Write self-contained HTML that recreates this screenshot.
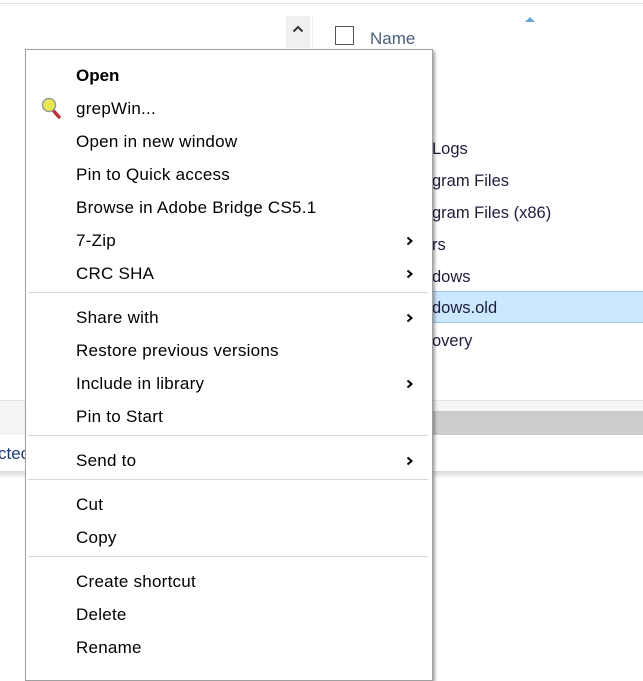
<!DOCTYPE html>
<html><head><style>
body{margin:0;width:643px;height:666px;overflow:hidden;background:#fff;font-family:"Liberation Sans",sans-serif;position:relative}
.a{position:absolute}
.f{position:absolute;left:420px;font-size:16.5px;color:#1e1e3c;white-space:nowrap;overflow:hidden;width:223px;height:32px;line-height:34px;padding-left:12px;box-sizing:border-box}
#menu{position:absolute;left:25px;top:49px;width:406px;height:630px;border:1px solid #a0a0a0;background:#fff;box-shadow:2px 2px 3px rgba(0,0,0,.35)}
.i{position:absolute;left:50px;font-size:17px;letter-spacing:0.25px;color:#000;line-height:20px}
.r{position:absolute;left:380px;}
.s{position:absolute;left:2px;width:400px;height:1px;background:#d7d7d7}
</style></head><body>
<div class="a" style="left:0;top:3px;width:643px;height:1px;background:#e3e3e3"></div>
<div class="a" style="left:286px;top:16px;width:24px;height:32px;background:#f0f0f0"></div>
<svg class="a" style="left:292px;top:25px" width="12" height="8"><path d="M1.5 6.5 L6 2 L10.5 6.5" fill="none" stroke="#333" stroke-width="2"/></svg>
<div class="a" style="left:312px;top:16px;width:1px;height:32px;background:#f0f0f0"></div>
<div class="a" style="left:335px;top:26px;width:19px;height:19px;border:1px solid #555;box-sizing:border-box"></div>
<div class="a" style="left:370px;top:29px;font-size:17px;color:#4c607a">Name</div>
<div class="a" style="left:525px;top:17px;width:0;height:0;border-left:5px solid transparent;border-right:5px solid transparent;border-bottom:5px solid #6aa5d6"></div>

<div class="f" style="top:132px">Logs</div>
<div class="f" style="top:164px">gram Files</div>
<div class="f" style="top:196px">gram Files (x86)</div>
<div class="f" style="top:228px">rs</div>
<div class="f" style="top:260px">dows</div>
<div class="f" style="top:291px;height:32px;background:#cce8ff;border-top:1px solid #99c9ef;border-bottom:1px solid #99c9ef;line-height:32px">dows.old</div>
<div class="f" style="top:324px">overy</div>

<div class="a" style="left:0;top:400px;width:643px;height:35px;background:#f5f5f5;border-top:1px solid #e3e3e3"></div>
<div class="a" style="left:400px;top:411px;width:243px;height:24px;background:#cccccc"></div>
<div class="a" style="left:0;top:435px;width:643px;height:36px;background:#fff"></div>
<div class="a" style="left:-2px;top:444px;font-size:17px;color:#1e3c78">ctec</div>
<div class="a" style="left:0;top:471px;width:643px;height:8px;background:linear-gradient(#d8d8d8,#fff)"></div>

<div id="menu">
<div class="i" style="top:16px;font-weight:bold;letter-spacing:0">Open</div>
<svg class="a" style="left:14px;top:47px" width="22" height="22" viewBox="0 0 22 22"><line x1="12" y1="12" x2="19" y2="20" stroke="#c0303a" stroke-width="3.5" stroke-linecap="round"/><circle cx="9" cy="8" r="6.5" fill="#eaea50" stroke="#9a9a9a" stroke-width="1.5"/></svg>
<div class="i" style="top:49px">grepWin...</div>
<div class="i" style="top:82px">Open in new window</div>
<div class="i" style="top:115px">Pin to Quick access</div>
<div class="i" style="top:148px">Browse in Adobe Bridge CS5.1</div>
<div class="i" style="top:181px">7-Zip</div><svg class="r" style="top:186px" width="8" height="10"><path d="M1.5 1.5 L5.5 5 L1.5 8.5" fill="none" stroke="#000" stroke-width="2"/></svg>
<div class="i" style="top:214px">CRC SHA</div><svg class="r" style="top:219px" width="8" height="10"><path d="M1.5 1.5 L5.5 5 L1.5 8.5" fill="none" stroke="#000" stroke-width="2"/></svg>
<div class="s" style="top:242px"></div>
<div class="i" style="top:258px">Share with</div><svg class="r" style="top:263px" width="8" height="10"><path d="M1.5 1.5 L5.5 5 L1.5 8.5" fill="none" stroke="#000" stroke-width="2"/></svg>
<div class="i" style="top:291px">Restore previous versions</div>
<div class="i" style="top:324px">Include in library</div><svg class="r" style="top:329px" width="8" height="10"><path d="M1.5 1.5 L5.5 5 L1.5 8.5" fill="none" stroke="#000" stroke-width="2"/></svg>
<div class="i" style="top:357px">Pin to Start</div>
<div class="s" style="top:385px"></div>
<div class="i" style="top:401px">Send to</div><svg class="r" style="top:406px" width="8" height="10"><path d="M1.5 1.5 L5.5 5 L1.5 8.5" fill="none" stroke="#000" stroke-width="2"/></svg>
<div class="s" style="top:429px"></div>
<div class="i" style="top:445px">Cut</div>
<div class="i" style="top:478px">Copy</div>
<div class="s" style="top:506px"></div>
<div class="i" style="top:522px">Create shortcut</div>
<div class="i" style="top:555px">Delete</div>
<div class="i" style="top:588px">Rename</div>
</div>
</body></html>
